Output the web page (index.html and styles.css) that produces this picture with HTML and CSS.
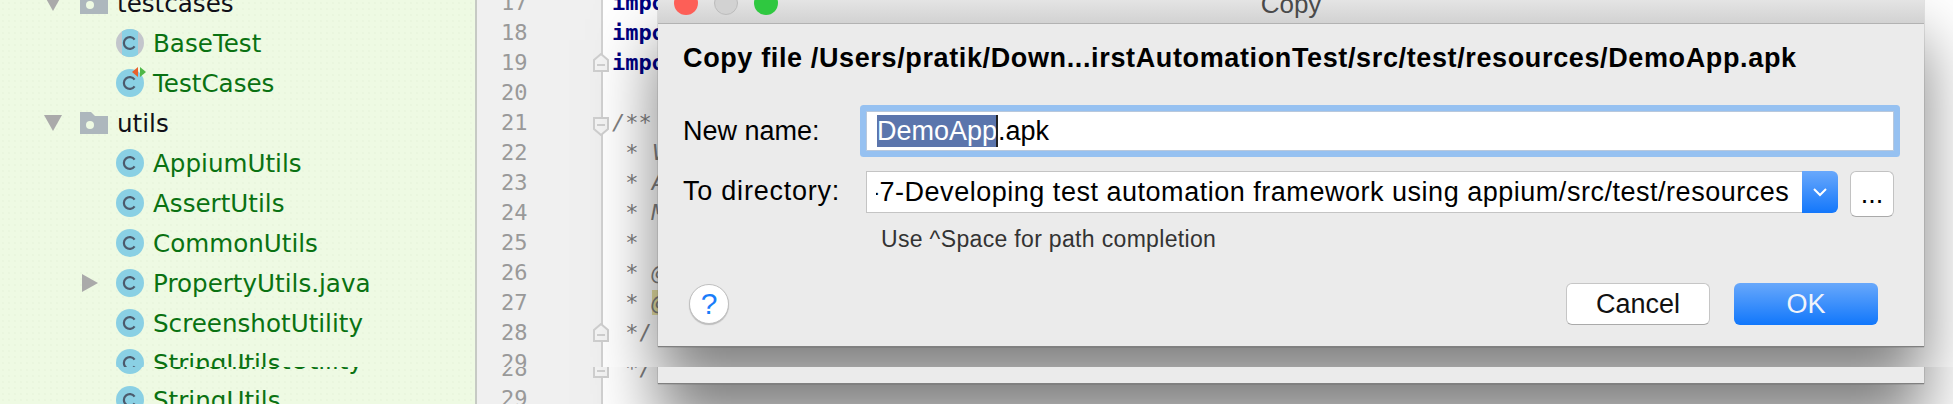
FILE: index.html
```html
<!DOCTYPE html>
<html lang="en">
<head>
<meta charset="utf-8">
<title>Copy</title>
<link rel="stylesheet" href="styles.css">
</head>
<body>
<svg class="defs" width="0" height="0" aria-hidden="true">
  <defs><clipPath id="disc"><circle cx="14" cy="14" r="14"/></clipPath></defs>
  <symbol id="cls" viewBox="0 0 28 28"><circle cx="14" cy="14" r="14" fill="#8ad0e4"/><path d="M18.6 10.6a5.9 5.9 0 1 0 0 6.8" fill="none" stroke="#4c5a6c" stroke-width="2.2"/></symbol>
  <symbol id="abs" viewBox="0 0 28 28"><circle cx="14" cy="14" r="14" fill="#c3c6cc"/><rect x="6" y="0" width="16" height="28" fill="#8ad0e4" clip-path="url(#disc)"/><path d="M18.6 10.6a5.9 5.9 0 1 0 0 6.8" fill="none" stroke="#4c5a6c" stroke-width="2.2"/></symbol>
  <symbol id="mix" viewBox="0 0 32 32"><circle cx="14" cy="18" r="14" fill="#8ad0e4"/><path d="M18.6 14.6a5.9 5.9 0 1 0 0 6.8" fill="none" stroke="#4c5a6c" stroke-width="2.2"/><path d="M22 2v10l-6-5z" fill="#e8602c"/><path d="M24 2v10l6-5z" fill="#4fb848"/></symbol>
  <symbol id="folder" viewBox="0 0 28 22"><path d="M0 0h11l4 4h13v18H0z" fill="#adb7bd"/><circle cx="10" cy="13" r="4" fill="#eefae3"/></symbol>
  <symbol id="down" viewBox="0 0 18 16"><path d="M0 0h18L9 16z" fill="#aaaaaa"/></symbol>
  <symbol id="right" viewBox="0 0 16 18"><path d="M0 0l16 9L0 18z" fill="#aaaaaa"/></symbol>
  <symbol id="foldup" viewBox="0 0 16 19"><path d="M8 1l7 6v11H1V7z" fill="#f4f4f4" stroke="#cfcfcf" stroke-width="2"/><path d="M4 12h8" stroke="#c4c4c4" stroke-width="1.5"/></symbol>
  <symbol id="folddown" viewBox="0 0 16 19"><path d="M1 1h14v11l-7 6-7-6z" fill="#f4f4f4" stroke="#cfcfcf" stroke-width="2"/><path d="M4 8h8" stroke="#c4c4c4" stroke-width="1.5"/></symbol>
</svg>

<section class="strip strip-top">
  <aside class="tree">
    <div class="row lvl1"><span class="twist"><svg class="arrow-d"><use href="#down"/></svg></span><svg class="ic ic-folder"><use href="#folder"/></svg><span class="dir">testcases</span></div>
    <div class="row lvl2"><span class="twist"></span><svg class="ic"><use href="#abs"/></svg><span class="file">BaseTest</span></div>
    <div class="row lvl2"><span class="twist"></span><svg class="ic ic-mix"><use href="#mix"/></svg><span class="file">TestCases</span></div>
    <div class="row lvl1"><span class="twist"><svg class="arrow-d"><use href="#down"/></svg></span><svg class="ic ic-folder"><use href="#folder"/></svg><span class="dir">utils</span></div>
    <div class="row lvl2"><span class="twist"></span><svg class="ic"><use href="#cls"/></svg><span class="file">AppiumUtils</span></div>
    <div class="row lvl2"><span class="twist"></span><svg class="ic"><use href="#cls"/></svg><span class="file">AssertUtils</span></div>
    <div class="row lvl2"><span class="twist"></span><svg class="ic"><use href="#cls"/></svg><span class="file">CommonUtils</span></div>
    <div class="row lvl2"><span class="twist"><svg class="arrow-r"><use href="#right"/></svg></span><svg class="ic"><use href="#cls"/></svg><span class="file">PropertyUtils.java</span></div>
    <div class="row lvl2"><span class="twist"></span><svg class="ic"><use href="#cls"/></svg><span class="file">ScreenshotUtility</span></div>
    <div class="row lvl2"><span class="twist"></span><svg class="ic"><use href="#cls"/></svg><span class="file">StringUtils</span></div>
  </aside>
  <div class="gutter">
    <div class="ln">17</div>
    <div class="ln">18</div>
    <div class="ln">19<svg class="fold"><use href="#foldup"/></svg></div>
    <div class="ln">20</div>
    <div class="ln">21<svg class="fold fold-d"><use href="#folddown"/></svg></div>
    <div class="ln">22</div>
    <div class="ln">23</div>
    <div class="ln">24</div>
    <div class="ln">25</div>
    <div class="ln">26</div>
    <div class="ln">27</div>
    <div class="ln">28<svg class="fold"><use href="#foldup"/></svg></div>
    <div class="ln">29</div>
  </div>
  <div class="code">
    <div class="cl kw">import</div>
    <div class="cl kw">import</div>
    <div class="cl kw">import</div>
    <div class="cl"></div>
    <div class="cl cm"><i>/**</i></div>
    <div class="cl cm"> * <i>V</i></div>
    <div class="cl cm"> * <i>A</i></div>
    <div class="cl cm"> * <i>M</i></div>
    <div class="cl cm"> *</div>
    <div class="cl cm"> * <i>@</i></div>
    <div class="cl cm"> * <i class="warn">@</i></div>
    <div class="cl cm"> */</div>
    <div class="cl"></div>
  </div>

  <div class="dialog">
    <header class="titlebar">
      <div class="lights"><span class="light red"></span><span class="light gray"></span><span class="light green"></span></div>
      <div class="title">Copy</div>
    </header>
    <div class="dlg-body">
      <h1 class="heading">Copy file /Users/pratik/Down...irstAutomationTest/src/test/resources/DemoApp.apk</h1>
      <div class="form">
        <label class="lbl">New name:</label>
        <div class="name-input"><span class="sel">DemoApp</span><span class="caret"></span>.apk</div>
        <label class="lbl lbl-wide">To directory:</label>
        <div class="dir-field">
          <div class="dir-input"><div class="dir-clip"><span class="dir-text">-7-Developing test automation framework using appium/src/test/resources</span></div></div>
          <div class="drop"><svg width="16" height="10" viewBox="0 0 16 10"><path d="M2 2l6 6 6-6" fill="none" stroke="#fff" stroke-width="2"/></svg></div>
          <div class="browse">...</div>
        </div>
        <div class="hint">Use ^Space for path completion</div>
      </div>
      <footer class="actions">
        <div class="help">?</div>
        <div class="btn">Cancel</div>
        <div class="btn primary">OK</div>
      </footer>
    </div>
  </div>
</section>

<section class="strip strip-bottom">
  <aside class="tree">
    <div class="row lvl2"><span class="twist"></span><svg class="ic"><use href="#cls"/></svg><span class="file">ScreenshotUtility</span></div>
    <div class="row lvl2"><span class="twist"></span><svg class="ic"><use href="#cls"/></svg><span class="file">StringUtils</span></div>
  </aside>
  <div class="gutter">
    <div class="ln">28<svg class="fold"><use href="#foldup"/></svg></div>
    <div class="ln">29</div>
  </div>
  <div class="code">
    <div class="cl cm"> */</div>
    <div class="cl"></div>
  </div>
  <div class="dialog dialog-tail"></div>
</section>
</body>
</html>
```
FILE: styles.css
```css
* { box-sizing: border-box; }
html, body { margin: 0; padding: 0; }
body { width: 1953px; height: 404px; overflow: hidden; background: #fff; font-family: "Liberation Sans", Arial, sans-serif; }
.defs { display: block; height: 0; }

.strip { position: relative; display: flex; overflow: hidden; background: #fff; }
.strip-top { height: 367px; }
.strip-bottom { height: 37px; }

/* project tree */
.tree {
  width: 477px; flex: none;
  background-color: #eefae3;
  background-image: radial-gradient(#e4f2d8 0.6px, transparent 0.8px);
  background-size: 6px 6px;
  border-right: 2px solid #c6cac4;
  font-family: "DejaVu Sans", sans-serif; font-size: 24.6px;
}
.strip-top .tree > :first-child { margin-top: -17px; }
.strip-bottom .tree > :first-child { margin-top: -27px; }
.row { display: flex; align-items: center; height: 40px; white-space: nowrap; }
.lvl1 { padding-left: 44px; }
.lvl2 { padding-left: 80px; }
.twist { width: 36px; flex: none; display: flex; align-items: center; }
.ic { width: 28px; height: 28px; flex: none; margin-right: 9px; }
.ic-mix { width: 32px; height: 32px; margin-top: -4px; margin-right: 5px; }
.ic-folder { height: 22px; }
.arrow-d { width: 18px; height: 16px; }
.arrow-r { width: 16px; height: 18px; margin-left: 2px; }
.dir { color: #101018; }
.file { color: #0a7212; }

/* gutter */
.gutter {
  width: 126px; flex: none;
  background: #f0f0f0;
  border-right: 2px solid #d2d2d2;
  padding-left: 24px;
  font: 22px/30px "DejaVu Sans Mono", monospace; color: #999;
}
.strip-top .gutter > :first-child { margin-top: -12px; }
.strip-bottom .gutter > :first-child { margin-top: -13px; }
.ln { position: relative; height: 30px; }
.fold { position: absolute; left: 92px; top: 5px; width: 16px; height: 19px; }
.fold-d { top: 9px; }

/* code */
.code { flex: 1; padding-left: 9px; font: 22px/30px "DejaVu Sans Mono", monospace; }
.strip-top .code > :first-child { margin-top: -12px; }
.strip-bottom .code > :first-child { margin-top: -13px; }
.cl { height: 30px; white-space: pre; }
.kw { color: #000080; font-weight: bold; }
.cm { color: #808080; }
.warn { background: #e8e2a4; }

/* dialog */
.dialog {
  position: absolute; left: 658px; top: 0; width: 1266px; height: 347px;
  background: #ebebeb;
  border-bottom: 1px solid #808080;
  box-shadow: 0 40px 60px rgba(0,0,0,.5), 0 0 1px #777;
  display: flex; flex-direction: column;
}
.dialog-tail { top: -330px; }
.titlebar {
  height: 24px; flex: none;
  display: grid; grid-template-columns: 1fr auto 1fr;
  background: linear-gradient(#e4e4e4, #d2d2d2);
  border-bottom: 1px solid #b2b2b2;
}
.lights { display: flex; gap: 16px; padding-left: 16px; margin-top: -9px; }
.light { width: 24px; height: 24px; border-radius: 50%; }
.red { background: #fd5f57; }
.gray { background: #d2d2d2; border: 1px solid #bcbcbc; }
.green { background: #2fc840; }
.title { font-size: 26px; line-height: 24px; margin-top: -8px; color: #4a4a4a; }

.dlg-body { flex: 1; padding: 0 0 0 25px; display: flex; flex-direction: column; }
.heading { margin: 18px 0 0; font-size: 27px; letter-spacing: .63px; line-height: 32px; font-weight: bold; color: #000; white-space: nowrap; }

.form { display: grid; grid-template-columns: 183px 1028px; grid-template-rows: 40px 46px auto; row-gap: 20px; margin-top: 37px; font-size: 27px; color: #000; }
.lbl { display: flex; align-items: center; height: 40px; }
.lbl-wide { letter-spacing: .77px; }
.name-input {
  display: flex; align-items: center; padding-left: 10px;
  background: #fff; border: 1px solid #b8c8dc; border-radius: 1px;
  box-shadow: 0 0 0 6px #96c1f1;
  white-space: nowrap;
}
.sel { background: #5b75ac; color: #fff; height: 32px; line-height: 32px; }
.caret { width: 2px; height: 32px; background: #222; margin-left: -1px; }
.dir-field { display: flex; align-items: flex-start; }
.dir-input { width: 936px; height: 42px; background: #fff; border: 1px solid #c4c4c4; border-right: 0; padding-left: 9px; display: flex; align-items: center; white-space: nowrap; }
.dir-clip { flex: 1; overflow: hidden; }
.dir-text { display: block; margin-left: -6px; letter-spacing: .52px; }
.drop { width: 36px; height: 42px; flex: none; display: flex; align-items: center; justify-content: center; background: linear-gradient(#69a8fb, #1377fb); border-radius: 0 6px 6px 0; }
.browse { width: 44px; height: 46px; margin-left: 12px; flex: none; background: #fff; border: 1px solid #c2c2c2; border-bottom-color: #aaa; border-radius: 6px; text-align: center; line-height: 44px; font-size: 27px; }
.hint { grid-column: 2; padding-left: 15px; margin-top: -12px; font-size: 23px; letter-spacing: .33px; line-height: 28px; color: #333; }

.actions { display: flex; align-items: center; margin-top: 30px; }
.help { width: 40px; height: 40px; margin-left: 6px; border-radius: 50%; background: #fff; border: 1px solid #c0c0c0; box-shadow: 0 1px 1px #bbb; color: #1a7dfa; font-size: 30px; text-align: center; line-height: 38px; }
.btn { width: 144px; height: 42px; background: #fff; border: 1px solid #c6c6c6; border-bottom-color: #aaa; border-radius: 6px; text-align: center; line-height: 40px; font-size: 27px; color: #111; }
.help + .btn { margin-left: 837px; }
.btn.primary { margin-left: 24px; border: 0; line-height: 42px; color: #f0f4fa; background: linear-gradient(#68a8fb, #1177fb); }
```
